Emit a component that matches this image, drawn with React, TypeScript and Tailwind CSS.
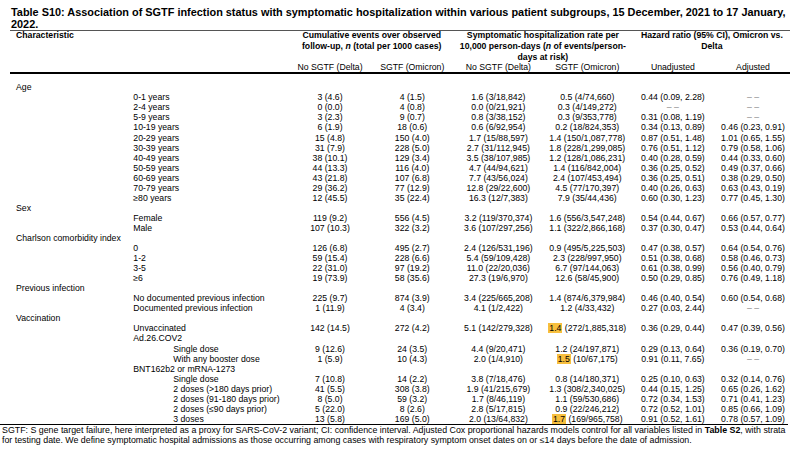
import React from "react";

const GRID =
  "grid grid-cols-[279.5px_81px_83.5px_88.75px_89px_82.25px_78px]";

type Row =
  | { t: "cat"; label: string }
  | { t: "sub"; label: string; lvl: 1 | 2; cells?: string[]; hl?: boolean };

const D = "--";

const rows: Row[] = [
  { t: "cat", label: "Age" },
  { t: "sub", lvl: 1, label: "0-1 years", cells: ["3 (4.6)", "4 (1.5)", "1.6 (3/18,842)", "0.5 (4/74,660)", "0.44 (0.09, 2.28)", D] },
  { t: "sub", lvl: 1, label: "2-4 years", cells: ["0 (0.0)", "4 (0.8)", "0.0 (0/21,921)", "0.3 (4/149,272)", D, D] },
  { t: "sub", lvl: 1, label: "5-9 years", cells: ["3 (2.3)", "9 (0.7)", "0.8 (3/38,152)", "0.3 (9/353,778)", "0.31 (0.08, 1.19)", D] },
  { t: "sub", lvl: 1, label: "10-19 years", cells: ["6 (1.9)", "18 (0.6)", "0.6 (6/92,954)", "0.2 (18/824,353)", "0.34 (0.13, 0.89)", "0.46 (0.23, 0.91)"] },
  { t: "sub", lvl: 1, label: "20-29 years", cells: ["15 (4.8)", "150 (4.0)", "1.7 (15/88,597)", "1.4 (150/1,087,778)", "0.87 (0.51, 1.48)", "1.01 (0.65, 1.55)"] },
  { t: "sub", lvl: 1, label: "30-39 years", cells: ["31 (7.9)", "228 (5.0)", "2.7 (31/112,945)", "1.8 (228/1,299,085)", "0.76 (0.51, 1.12)", "0.79 (0.58, 1.06)"] },
  { t: "sub", lvl: 1, label: "40-49 years", cells: ["38 (10.1)", "129 (3.4)", "3.5 (38/107,985)", "1.2 (128/1,086,231)", "0.40 (0.28, 0.59)", "0.44 (0.33, 0.60)"] },
  { t: "sub", lvl: 1, label: "50-59 years", cells: ["44 (13.3)", "116 (4.0)", "4.7 (44/94,621)", "1.4 (116/842,004)", "0.36 (0.25, 0.52)", "0.49 (0.37, 0.66)"] },
  { t: "sub", lvl: 1, label: "60-69 years", cells: ["43 (21.8)", "107 (6.8)", "7.7 (43/56,024)", "2.4 (107/453,494)", "0.36 (0.25, 0.51)", "0.38 (0.29, 0.50)"] },
  { t: "sub", lvl: 1, label: "70-79 years", cells: ["29 (36.2)", "77 (12.9)", "12.8 (29/22,600)", "4.5 (77/170,397)", "0.40 (0.26, 0.63)", "0.63 (0.43, 0.19)"] },
  { t: "sub", lvl: 1, label: "\u226580 years", cells: ["12 (45.5)", "35 (22.4)", "16.3 (12/7,383)", "7.9 (35/44,436)", "0.60 (0.30, 1.23)", "0.77 (0.45, 1.30)"] },
  { t: "cat", label: "Sex" },
  { t: "sub", lvl: 1, label: "Female", cells: ["119 (9.2)", "556 (4.5)", "3.2 (119/370,374)", "1.6 (556/3,547,248)", "0.54 (0.44, 0.67)", "0.66 (0.57, 0.77)"] },
  { t: "sub", lvl: 1, label: "Male", cells: ["107 (10.3)", "322 (3.2)", "3.6 (107/297,256)", "1.1 (322/2,866,168)", "0.37 (0.30, 0.47)", "0.53 (0.44, 0.64)"] },
  { t: "cat", label: "Charlson comorbidity index" },
  { t: "sub", lvl: 1, label: "0", cells: ["126 (6.8)", "495 (2.7)", "2.4 (126/531,196)", "0.9 (495/5,225,503)", "0.47 (0.38, 0.57)", "0.64 (0.54, 0.76)"] },
  { t: "sub", lvl: 1, label: "1-2", cells: ["59 (15.4)", "228 (6.6)", "5.4 (59/109,428)", "2.3 (228/997,950)", "0.51 (0.38, 0.68)", "0.58 (0.46, 0.73)"] },
  { t: "sub", lvl: 1, label: "3-5", cells: ["22 (31.0)", "97 (19.2)", "11.0 (22/20,036)", "6.7 (97/144,063)", "0.61 (0.38, 0.99)", "0.56 (0.40, 0.79)"] },
  { t: "sub", lvl: 1, label: "\u22656", cells: ["19 (73.9)", "58 (35.6)", "27.3 (19/6,970)", "12.6 (58/45,900)", "0.50 (0.29, 0.85)", "0.76 (0.49, 1.18)"] },
  { t: "cat", label: "Previous infection" },
  { t: "sub", lvl: 1, label: "No documented previous infection", cells: ["225 (9.7)", "874 (3.9)", "3.4 (225/665,208)", "1.4 (874/6,379,984)", "0.46 (0.40, 0.54)", "0.60 (0.54, 0.68)"] },
  { t: "sub", lvl: 1, label: "Documented previous infection", cells: ["1 (11.9)", "4 (3.4)", "4.1 (1/2,422)", "1.2 (4/33,432)", "0.27 (0.03, 2.44)", D] },
  { t: "cat", label: "Vaccination" },
  { t: "sub", lvl: 1, label: "Unvaccinated", hl: true, cells: ["142 (14.5)", "272 (4.2)", "5.1 (142/279,328)", "1.4 (272/1,885,318)", "0.36 (0.29, 0.44)", "0.47 (0.39, 0.56)"] },
  { t: "sub", lvl: 1, label: "Ad.26.COV2" },
  { t: "sub", lvl: 2, label: "Single dose", cells: ["9 (12.6)", "24 (3.5)", "4.4 (9/20,471)", "1.2 (24/197,871)", "0.29 (0.13, 0.64)", "0.36 (0.19, 0.70)"] },
  { t: "sub", lvl: 2, label: "With any booster dose", hl: true, cells: ["1 (5.9)", "10 (4.3)", "2.0 (1/4,910)", "1.5 (10/67,175)", "0.91 (0.11, 7.65)", D] },
  { t: "sub", lvl: 1, label: "BNT162b2 or mRNA-1273" },
  { t: "sub", lvl: 2, label: "Single dose", cells: ["7 (10.8)", "14 (2.2)", "3.8 (7/18,476)", "0.8 (14/180,371)", "0.25 (0.10, 0.63)", "0.32 (0.14, 0.76)"] },
  { t: "sub", lvl: 2, label: "2 doses (>180 days prior)", cells: ["41 (5.5)", "308 (3.8)", "1.9 (41/215,679)", "1.3 (308/2,340,025)", "0.44 (0.15, 1.25)", "0.65 (0.26, 1.62)"] },
  { t: "sub", lvl: 2, label: "2 doses (91-180 days prior)", cells: ["8 (5.0)", "59 (3.2)", "1.7 (8/46,119)", "1.1 (59/530,686)", "0.72 (0.34, 1.53)", "0.71 (0.41, 1.23)"] },
  { t: "sub", lvl: 2, label: "2 doses (\u226490 days prior)", cells: ["5 (22.0)", "8 (2.6)", "2.8 (5/17,815)", "0.9 (22/246,212)", "0.72 (0.52, 1.01)", "0.85 (0.66, 1.09)"] },
  { t: "sub", lvl: 2, label: "3 doses", hl: true, cells: ["13 (5.8)", "169 (5.0)", "2.0 (13/64,832)", "1.7 (169/965,758)", "0.91 (0.52, 1.61)", "0.78 (0.57, 1.09)"] },
];

function Cell({ v, hl }: { v: string; hl?: boolean }) {
  if (v === D) {
    return <div className="text-center whitespace-nowrap text-[#8a8a8a]">{"\u2013 \u2013"}</div>;
  }
  if (hl) {
    const i = v.indexOf(" ");
    return (
      <div className="text-center whitespace-nowrap">
        <span className="inline-block bg-[#f7bf3e] px-[1px] h-[10.06px]">{v.slice(0, i)}</span>
        {v.slice(i)}
      </div>
    );
  }
  return <div className="text-center whitespace-nowrap">{v}</div>;
}

export default function App() {
  return (
    <div className="w-[800px] h-[454px] bg-white text-black overflow-hidden font-['Liberation_Sans',Arial,sans-serif]">
      <div className="h-[30px] pl-[11px] pt-[5.5px] text-[10.9px] leading-[12.5px] font-bold whitespace-nowrap">
        Table S10: Association of SGTF infection status with symptomatic hospitalization within various patient subgroups, 15 December, 2021 to 17 January,
        <br />
        2022.
      </div>
      <div className="ml-[10px] w-[780px] h-px bg-[#555]" />
      <div className={`ml-[10px] mt-[-1px] h-[33px] ${GRID} text-[8.7px] leading-[11px] font-bold`}>
        <div className="pl-[6px]">Characteristic</div>
        <div className="col-span-2 text-center whitespace-nowrap">
          Cumulative events over observed
          <br />
          follow-up, <i>n</i> (total per 1000 cases)
        </div>
        <div className="col-span-2 text-center whitespace-nowrap">
          Symptomatic hospitalization rate per
          <br />
          10,000 person-days (<i>n</i> of events/person-
          <br />
          days at risk)
        </div>
        <div className="col-span-2 text-center whitespace-nowrap">
          Hazard ratio (95% CI), Omicron vs.
          <br />
          Delta
        </div>
      </div>
      <div className={`ml-[10px] h-[9px] ${GRID} text-[8.7px] leading-[9px]`}>
        <div />
        <div className="text-center whitespace-nowrap">No SGTF (Delta)</div>
        <div className="text-center whitespace-nowrap">SGTF (Omicron)</div>
        <div className="text-center whitespace-nowrap">No SGTF (Delta)</div>
        <div className="text-center whitespace-nowrap">SGTF (Omicron)</div>
        <div className="text-center whitespace-nowrap">Unadjusted</div>
        <div className="text-center whitespace-nowrap">Adjusted</div>
      </div>
      <div className="ml-[10px] w-[780px] h-[2px] bg-black" />
      <div className="ml-[10px] pt-[8.3px] text-[8.7px]">
        {rows.map((r, idx) =>
          r.t === "cat" ? (
            <div key={idx} className="h-[10.06px] leading-[10.06px] pl-[6px] whitespace-nowrap">
              {r.label}
            </div>
          ) : (
            <div key={idx} className={`${GRID} h-[10.06px] leading-[10.06px]`}>
              <div className={`whitespace-nowrap ${r.lvl === 1 ? "pl-[123.3px]" : "pl-[163.3px]"}`}>{r.label}</div>
              {r.cells
                ? r.cells.map((c, j) => <Cell key={j} v={c} hl={r.hl && j === 3} />)
                : null}
            </div>
          )
        )}
      </div>
      <div className="w-[788px] h-[1.5px] bg-black" />
      <div className="pl-[2px] text-[8.84px] leading-[10px] whitespace-nowrap">
        SGTF: S gene target failure, here interpreted as a proxy for SARS-CoV-2 variant; CI: confidence interval. Adjusted Cox proportional hazards models control for all variables listed in <b>Table S2</b>, with strata
        <br />
        for testing date. We define symptomatic hospital admissions as those occurring among cases with respiratory symptom onset dates on or {"\u2264"}14 days before the date of admission.
      </div>
    </div>
  );
}
